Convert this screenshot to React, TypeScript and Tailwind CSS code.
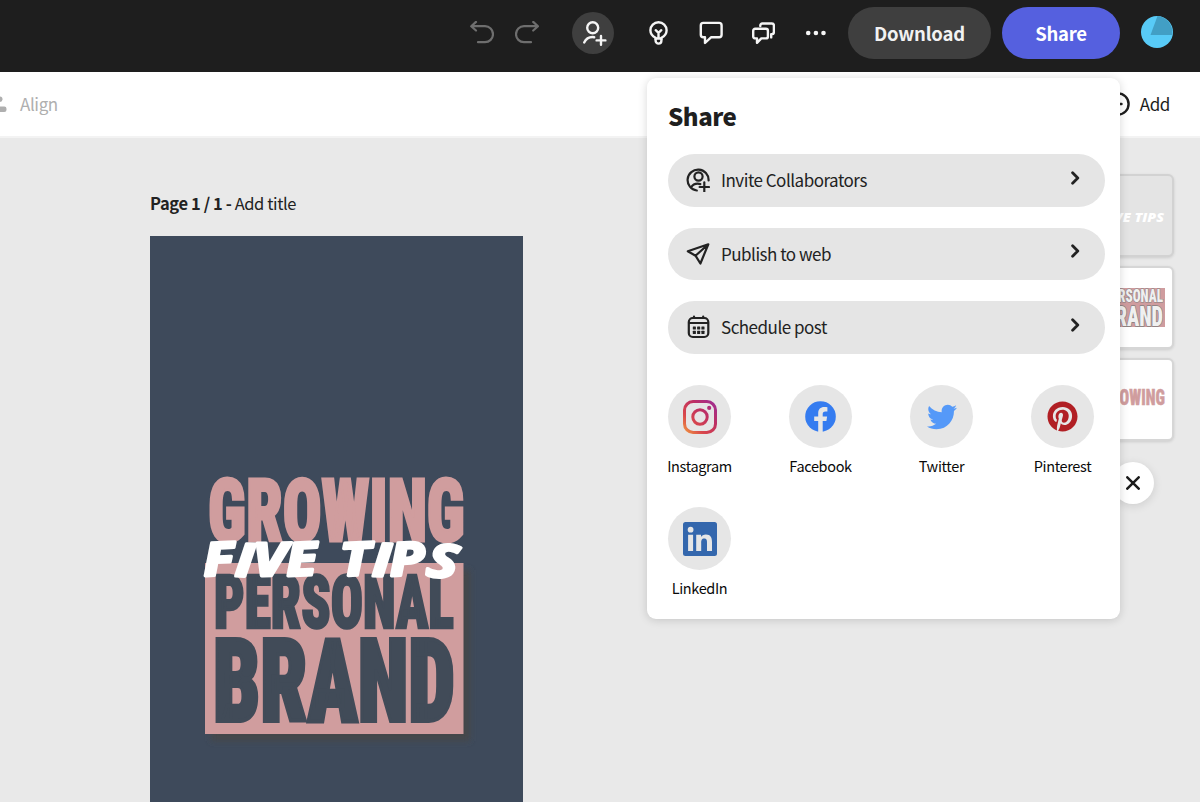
import type { ReactNode } from "react";
import { FaPinterest, FaTwitter } from "react-icons/fa";

function Stroke({ w = 24, h = 24, sw = 2, children }: { w?: number; h?: number; sw?: number; children: ReactNode }) {
  return (
    <svg width={w} height={h} viewBox={`0 0 ${w} ${h}`} fill="none" stroke="currentColor" strokeWidth={sw} strokeLinecap="round" strokeLinejoin="round" className="block shrink-0">
      {children}
    </svg>
  );
}

function Header() {
  return (
    <header className="flex h-[72px] shrink-0 items-center justify-end bg-[#1e1e1e] pr-[27px] pb-[5.5px] text-[#f5f5f5]">
      <button className="mr-[21px] text-[#6e6e6e]">
        <Stroke sw={2.2}><path d="M6 .9 1.2 5.2 6 9.5M1.5 5.2H15a8 8 0 0 1 0 16H8" /></Stroke>
      </button>
      <button className="mr-[33px] text-[#6e6e6e]">
        <Stroke sw={2.2}><path d="M18.2.9 23 5.2 18.2 9.5M22.7 5.2H9a8 8 0 0 0 0 16h7" /></Stroke>
      </button>
      <button className="mr-8 rounded-full bg-[#3f3f3f]">
        <Stroke w={42} h={42} sw={2.4}>
          <circle cx="20.7" cy="15.7" r="5.5" />
          <path d="M12.2 30.5c1.7-3.7 4.5-5.5 8.3-5.500 .6 0 1.2.1 1.7.2M29 24v8.800M24.600 28.400h8.800" />
        </Stroke>
      </button>
      <button className="mr-[29px]">
        <Stroke sw={2.4}>
          <path d="M9.600 18v-1.200C6.400 15.200 4.400 12.500 4.400 9.300a8.100 8.100 0 0 1 16.200 0c0 3.200-2 5.900-5.200 7.500V18" />
          <path d="M9.600 17.500h5.800v2.200a2.900 2.900 0 0 1-5.800 0zM9.700 9.200l2.800 2.600 2.800-2.600M12.500 12v5.500" />
        </Stroke>
      </button>
      <button className="mr-7">
        <Stroke sw={2.4}><path d="M4.300 1.900h15.800a2.500 2.500 0 0 1 2.500 2.500v9.400a2.500 2.500 0 0 1-2.500 2.500H12l-6 5.700v-5.700H4.300a2.500 2.500 0 0 1-2.500-2.500V4.400a2.500 2.500 0 0 1 2.500-2.500z" /></Stroke>
      </button>
      <button className="mr-[29px]">
        <Stroke sw={2.4}>
          <path d="M4.200 7.800h10.700a2 2 0 0 1 2 2v5.600a2 2 0 0 1-2 2h-4.600L6 21.800v-4.400H4.200a2 2 0 0 1-2-2V9.800a2 2 0 0 1 2-2z" />
          <path d="M9.300 5V4.500a2 2 0 0 1 2-2h9.600a2 2 0 0 1 2 2v6.600a2 2 0 0 1-2 2h-.7v3.300" />
        </Stroke>
      </button>
      <button className="mr-5">
        <Stroke sw={0}><g fill="currentColor"><circle cx="4.200" cy="12" r="2.300" /><circle cx="11.900" cy="12" r="2.300" /><circle cx="19.500" cy="12" r="2.300" /></g></Stroke>
      </button>
      <button className="mr-[11px] h-[52px] w-[143px] rounded-full bg-[#3f3f3f] text-[18.500px] leading-6 font-semibold tracking-[-0.2px] text-[#f2f2f2]">Download</button>
      <button className="mr-[21px] h-[52px] w-[118px] rounded-full bg-[#5560df] text-[18.500px] leading-6 font-semibold tracking-[-0.3px] text-white">Share</button>
      <svg width="32" height="32" viewBox="0 0 32 32" className="mt-[-3px] shrink-0">
        <circle cx="16" cy="16" r="16" fill="#58cbf7" />
        <path d="M16.500 0A16 16 0 0 1 31 19H9.500z" fill="#429fc5" />
      </svg>
    </header>
  );
}

function Toolbar() {
  return (
    <div className="flex h-[66px] shrink-0 items-center justify-between border-b-2 border-[#f3f3f3] bg-white pr-[30px] text-[17px] leading-6 tracking-[-0.4px]">
      <div className="flex items-center text-[#afafaf]">
        <svg width="7" height="20" viewBox="0 0 7 20" fill="currentColor"><rect x="-6" y="2.500" width="8.500" height="5.500" rx="2.700" /><rect x="-6" y="12.500" width="12.500" height="5.500" rx="2.200" /></svg>
        <span className="ml-[13px]">Align</span>
      </div>
      <div className="flex items-center text-[#1c1c1c]">
        <Stroke w={24} h={24} sw={2.400}><circle cx="12" cy="12" r="10.600" /><path d="M8.500 12h7M12 8.500v7" /></Stroke>
        <span className="ml-2.5">Add</span>
      </div>
    </div>
  );
}

function Poster() {
  return (
    <svg width="373" height="566" viewBox="150 236 373 566" className="block">
      <defs>
        <filter id="soft" x="-10%" y="-10%" width="125%" height="125%"><feGaussianBlur stdDeviation="3" /></filter>
      </defs>
      <rect x="150" y="236" width="373" height="566" fill="#3e4a5b" />
      <rect x="211" y="570" width="259" height="171" fill="#454749" filter="url(#soft)" />
      <rect x="205" y="563" width="258.500" height="171" fill="#d09d9e" />
      <g fontFamily="Roboto, sans-serif" fontWeight="900" className="font-stretch-75%" strokeLinejoin="miter">
        <text x="208" y="540.500" fontSize="88" textLength="257" lengthAdjust="spacingAndGlyphs" fill="#d09d9e" stroke="#d09d9e" strokeWidth="3">GROWING</text>
        <g fill="#414b58" stroke="#414b58">
          <text x="214" y="627.500" fontSize="74" textLength="240" lengthAdjust="spacingAndGlyphs" strokeWidth="2.500">PERSONAL</text>
          <text x="213" y="721" fontSize="115" textLength="242" lengthAdjust="spacingAndGlyphs" strokeWidth="4">BRAND</text>
        </g>
      </g>
      <g fontFamily="'Open Sans', sans-serif" fontWeight="700" fontStyle="italic" fill="#fff" stroke="#fff" strokeWidth="3" strokeLinejoin="round" fontSize="46">
        <text x="204" y="576" textLength="114" lengthAdjust="spacingAndGlyphs" rotate="-3 3 -1 -3">FIVE</text>
        <text x="341" y="576" textLength="115" lengthAdjust="spacingAndGlyphs" rotate="-3 2 -3 6">TIPS</text>
      </g>
    </svg>
  );
}

function Card({ dim, children }: { dim?: boolean; children: ReactNode }) {
  return (
    <div className={`h-[83px] w-[83px] overflow-hidden rounded-md border-2 shadow-[0_1px_3px_rgba(0,0,0,0.12)] ${dim ? "border-[#d2d2d2] bg-[#e4e4e4]" : "border-[#d6d6d6] bg-white"}`}>
      <svg width="79" height="79" viewBox="0 0 79 79" fontFamily="Roboto, sans-serif" fontWeight="900">{children}</svg>
    </div>
  );
}

function Layers() {
  return (
    <aside className="flex w-[83px] flex-col items-center gap-[9px]">
      <Card dim>
        <text x="8" y="45.500" fontSize="13" fontFamily="'Open Sans', sans-serif" fontWeight="800" fontStyle="italic" textLength="63" lengthAdjust="spacingAndGlyphs" fill="#fff">FIVE TIPS</text>
      </Card>
      <Card>
        <rect x="8" y="20" width="64" height="39" fill="#cf9c9e" />
        <g className="font-stretch-75%">
          <text x="11" y="34" fontSize="18" textLength="59" lengthAdjust="spacingAndGlyphs" fill="#f0f0f0" stroke="#858080" strokeWidth="1.200" paintOrder="stroke">PERSONAL</text>
          <text x="11" y="57.500" fontSize="27" textLength="59" lengthAdjust="spacingAndGlyphs" fill="#f0f0f0" stroke="#858080" strokeWidth="1.500" paintOrder="stroke">BRAND</text>
        </g>
      </Card>
      <Card>
        <text x="8" y="44.500" fontSize="22" className="font-stretch-75%" textLength="64" lengthAdjust="spacingAndGlyphs" fill="#d09d9e" stroke="#d09d9e" strokeWidth=".5">GROWING</text>
      </Card>
      <button className="mt-[12px] flex size-[42px] items-center justify-center rounded-full bg-white text-[#1c1c1c] shadow-[0_2px_10px_rgba(0,0,0,0.12)]">
        <Stroke w={14} h={14} sw={2.500}><path d="m1.300 1.300 11.400 11.400M12.700 1.300 1.300 12.700" /></Stroke>
      </button>
    </aside>
  );
}

function Action({ icon, label }: { icon: ReactNode; label: string }) {
  return (
    <button className="flex h-[52.500px] w-full items-center rounded-full bg-[#e5e5e5] pr-[23px] pl-[18px] text-left text-[#222]">
      {icon}
      <span className="ml-[11px] flex-1 text-[17px] leading-6 tracking-[-0.5px]">{label}</span>
      <span className="mt-[-5px]"><Stroke w={12} h={14} sw={2.800}><path d="m2.600 1.800 5.200 5.200-5.200 5.200" /></Stroke></span>
    </button>
  );
}

function Social({ icon, label }: { icon: ReactNode; label: string }) {
  return (
    <button className="flex h-[93px] w-[63px] flex-col items-center">
      <span className="flex size-[63px] shrink-0 items-center justify-center rounded-full bg-[#e6e6e6]">{icon}</span>
      <span className="mt-[6px] text-[14.500px] leading-6 tracking-[-0.35px] whitespace-nowrap text-[#0a0a0a]">{label}</span>
    </button>
  );
}

function SharePanel() {
  return (
    <section className="absolute top-[78px] left-[647px] h-[541px] w-[473px] rounded-[9px] bg-white pt-[22px] pr-[15px] pl-[21px] shadow-[0_1px_10px_rgba(0,0,0,0.16)]">
      <h2 className="text-[24px] leading-8 font-black tracking-[-0.5px] text-[#1f1f1f]">Share</h2>
      <div className="mt-[22px] flex flex-col gap-[21px]">
        <Action label="Invite Collaborators" icon={
          <Stroke sw={2.200}>
            <path d="M10.800 22.500A10.500 10.500 0 1 1 22.600 12.500M5 19.500c1.500-2.500 3.700-3.800 6.700-3.800q1.300 0 2.600.4M18.300 14.300v9.400M13.600 19h9.400" />
            <circle cx="12.500" cy="8.500" r="4.100" />
          </Stroke>} />
        <Action label="Publish to web" icon={
          <Stroke sw={2.200}><path d="M1.800 9.200 22.300 2.300 14.400 21.500 9.500 13.700zM22.300 2.300 9.500 13.700" /></Stroke>} />
        <Action label="Schedule post" icon={
          <Stroke sw={2.200}>
            <rect x="2.800" y="3" width="19.500" height="19" rx="4" />
            <path d="M3 8h19M8 1.500V3M17.200 1.500V3" />
            <g fill="currentColor" stroke="none">
              {[6.8, 11.100, 15.400].map((x) => [11.500, 15.800].map((y) => <rect key={`${x}-${y}`} x={x} y={y} width="3.100" height="3.100" rx=".5" />))}
            </g>
          </Stroke>} />
      </div>
      <div className="mt-[31.500px] flex flex-wrap gap-x-[58px] gap-y-[29px]">
        <Social label="Instagram" icon={
          <svg width="36" height="36" viewBox="0 0 36 36" fill="none">
            <defs>
              <linearGradient id="insta" x1="0" y1="1" x2="1" y2="0">
                <stop offset="0" stopColor="#f3a040" /><stop offset=".3" stopColor="#d9484c" /><stop offset=".6" stopColor="#c0305f" /><stop offset="1" stopColor="#9b2d9b" />
              </linearGradient>
            </defs>
            <path fill="url(#insta)" fillRule="evenodd" d="M11 1h14a10 10 0 0 1 10 10v14a10 10 0 0 1-10 10H11A10 10 0 0 1 1 25V11A10 10 0 0 1 11 1zm.3 3A7.300 7.300 0 0 0 4 11.300v13.400A7.300 7.300 0 0 0 11.300 32h13.400a7.300 7.300 0 0 0 7.300-7.300V11.300A7.300 7.300 0 0 0 24.700 4zM18 9.300a8.700 8.700 0 1 1 0 17.400 8.700 8.700 0 0 1 0-17.400zm0 3a5.700 5.700 0 1 0 0 11.400 5.700 5.700 0 0 0 0-11.400zM27.200 6.800a2.100 2.100 0 1 1 0 4.200 2.100 2.100 0 0 1 0-4.200z" />
          </svg>} />
        <Social label="Facebook" icon={
          <svg width="31" height="31" viewBox="0 0 31 31">
            <circle cx="15.500" cy="15.500" r="15.300" fill="#357cf0" />
            <path fill="#e6e6e6" d="M13.200 31V20h-4v-4.600h4v-3.200c0-4 2.400-6.200 6-6.200 1.200 0 2.300.1 3.200.3v4.200h-2c-2 0-2.700 1.200-2.700 2.500v2.400h4.400L21.400 20h-3.700v11z" />
          </svg>} />
        <Social label="Twitter" icon={<FaTwitter size={30} color="#5599f8" />} />
        <Social label="Pinterest" icon={<FaPinterest size={31} color="#b11f24" />} />
        <Social label="LinkedIn" icon={
          <svg width="34" height="34" viewBox="0 0 34 34">
            <rect width="34" height="34" rx="2.500" fill="#3467ad" />
            <g fill="#e6e6e6"><circle cx="7.600" cy="7.700" r="2.900" /><path d="M5.100 12.800h5V29h-5zM13.200 12.800H18V15c.8-1.500 2.500-2.600 4.900-2.600 4.900 0 6.100 3.200 6.100 7.600v9h-5v-8c0-2.100-.1-4.400-2.700-4.400-2.700 0-3.100 2.100-3.100 4.300V29h-5z" /></g>
          </svg>} />
      </div>
    </section>
  );
}

export default function App() {
  return (
    <div className="relative flex h-[802px] w-[1200px] flex-col overflow-hidden bg-[#e9e9e9] font-['Noto_Sans_CJK_JP',sans-serif]">
      <Header />
      <Toolbar />
      <main className="flex flex-1 justify-between pr-[26px] pl-[150px]">
        <div>
          <div className="mt-[53px] mb-[21px] text-[16.500px] leading-6 tracking-[-0.4px] text-[#222]"><b className="font-semibold">Page 1 / 1 -</b> Add title</div>
          <Poster />
        </div>
        <div className="mt-9"><Layers /></div>
      </main>
      <SharePanel />
    </div>
  );
}
